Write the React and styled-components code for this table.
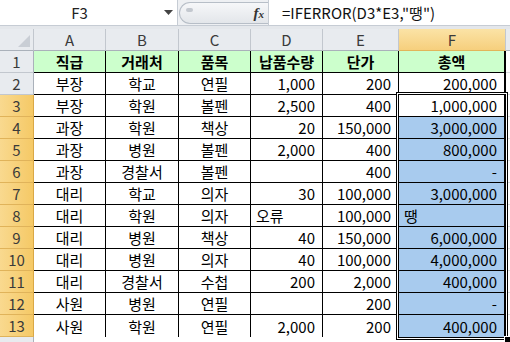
import React from "react";
import styled, { createGlobalStyle } from "styled-components";

const GlobalStyle = createGlobalStyle`
  html, body {
    margin: 0;
    padding: 0;
    background: #fff;
    overflow: hidden;
  }
  body {
    font-family: "Noto Sans CJK KR", "Noto Sans", sans-serif;
  }
`;

const COL_WIDTHS = [72, 73, 72, 72, 76, 107];
const ROW_HEAD = 34;
const HEAD_H = 22;
const ROW_H = 22;

const header = ["직급", "거래처", "품목", "납품수량", "단가", "총액"];

const rows = [
  ["부장", "학교", "연필", "1,000", "200", "200,000"],
  ["부장", "학원", "볼펜", "2,500", "400", "1,000,000"],
  ["과장", "학원", "책상", "20", "150,000", "3,000,000"],
  ["과장", "병원", "볼펜", "2,000", "400", "800,000"],
  ["과장", "경찰서", "볼펜", "", "400", "-"],
  ["대리", "학교", "의자", "30", "100,000", "3,000,000"],
  ["대리", "학원", "의자", "오류", "100,000", "땡"],
  ["대리", "병원", "책상", "40", "150,000", "6,000,000"],
  ["대리", "병원", "의자", "40", "100,000", "4,000,000"],
  ["대리", "경찰서", "수첩", "200", "2,000", "400,000"],
  ["사원", "병원", "연필", "", "200", "-"],
  ["사원", "학원", "연필", "2,000", "200", "400,000"],
];

const letters = ["A", "B", "C", "D", "E", "F"];

function alignFor(col, value) {
  if (col < 3) return "center";
  if (value === "오류" || value === "땡") return "left";
  return "right";
}

function App() {
  // selection F3:F13
  const selLeft = ROW_HEAD + COL_WIDTHS.slice(0, 5).reduce((a, b) => a + b, 0) - 3;
  const selTop = HEAD_H + ROW_H * 2 - 3;
  const selWidth = COL_WIDTHS[5] + 5;
  const selHeight = ROW_H * 11 + 6;

  return (
    <Sheet>
      <GlobalStyle />
      <FormulaBar>
        <NameBox>
          <NameText>F3</NameText>
          <Caret>
            <svg width="9" height="5" viewBox="0 0 9 5">
              <polygon points="0,0 9,0 4.5,5" fill="#444" />
            </svg>
          </Caret>
        </NameBox>
        <FxZone>
          <Pill>
            <GripDot />
            <Fx>
              f<small>x</small>
            </Fx>
          </Pill>
        </FxZone>
        <FormulaInput>=IFERROR(D3*E3,"땡")</FormulaInput>
      </FormulaBar>
      <Band />
      <GridWrap>
        <Grid>
          <Corner>
            <svg width="12" height="12" viewBox="0 0 12 12">
              <polygon points="12,0 12,12 0,12" fill="#c9ced5" />
            </svg>
          </Corner>
          {letters.map((l) => (
            <ColHead key={l} $active={l === "F"}>
              {l}
            </ColHead>
          ))}
          <ColHead $filler />

          <RowHead>1</RowHead>
          {header.map((h, i) => (
            <Cell key={h} $first={i === 0} $last={i === 5} $bg="#ccffcc" $bold>
              {h}
            </Cell>
          ))}
          <Blank />

          {rows.map((r, ri) => {
            const rowNo = ri + 2;
            const selected = rowNo >= 3;
            return (
              <React.Fragment key={rowNo}>
                <RowHead $active={selected}>{rowNo}</RowHead>
                {r.map((v, ci) => (
                  <Cell
                    key={ci}
                    $first={ci === 0}
                    $last={ci === 5}
                    $bottom={rowNo === 13}
                    $align={alignFor(ci, v)}
                    $bg={ci === 5 && rowNo >= 4 ? "#a8cbee" : "#fff"}
                  >
                    {v === "-" ? "- " : v}
                  </Cell>
                ))}
                <Blank />
              </React.Fragment>
            );
          })}

          <RowHead $tail />
          {letters.map((l) => (
            <Blank key={l} $tail />
          ))}
          <Blank $tail />
        </Grid>
        <Selection
          style={{ left: selLeft, top: selTop, width: selWidth, height: selHeight }}
        >
          <FillHandle />
        </Selection>
      </GridWrap>
    </Sheet>
  );
}

const Sheet = styled.div`
  width: 510px;
  height: 342px;
  overflow: hidden;
  background: #fff;
`;

const FormulaBar = styled.div`
  display: flex;
  height: 26px;
  box-sizing: border-box;
  border-bottom: 1px solid #c6ccd4;
  background: #eef0f3;
`;

const NameBox = styled.div`
  display: flex;
  align-items: center;
  width: 177px;
  background: #fff;
  border-right: 1px solid #c6ccd4;
  font-size: 15px;
  color: #222;
`;

const NameText = styled.span`
  flex: 1;
  text-align: center;
`;

const Caret = styled.span`
  display: flex;
  width: 18px;
  justify-content: center;
  padding-bottom: 1px;
`;

const FxZone = styled.div`
  width: 91px;
  display: flex;
  align-items: center;
  padding-top: 1px;
  box-sizing: border-box;
  border-right: 1px solid #c6ccd4;
`;

const Pill = styled.div`
  flex: 1;
  height: 22px;
  margin-left: 1px;
  box-sizing: border-box;
  border: 1px solid #b7bec7;
  border-right: none;
  border-radius: 12px 0 0 12px;
  background: linear-gradient(#f6f7f9, #e3e6ea);
  display: flex;
  align-items: center;
  justify-content: space-between;
  padding: 0 4px 0 6px;
`;

const GripDot = styled.span`
  width: 7px;
  height: 4px;
  border-radius: 3px;
  background: #c3c8cf;
  margin-top: -6px;
`;

const Fx = styled.span`
  font-family: "Liberation Serif", serif;
  font-style: italic;
  font-weight: 700;
  font-size: 15px;
  color: #333;
  small {
    font-size: 11px;
  }
`;

const FormulaInput = styled.div`
  flex: 1;
  background: #fff;
  display: flex;
  align-items: center;
  padding-left: 13px;
  font-size: 15px;
  color: #111;
  white-space: nowrap;
`;

const Band = styled.div`
  height: 3px;
  background: #e4e7eb;
`;

const GridWrap = styled.div`
  position: relative;
`;

const Grid = styled.div`
  display: grid;
  grid-template-columns: ${ROW_HEAD}px ${COL_WIDTHS.map((w) => `${w}px`).join(" ")} 1fr;
  grid-auto-rows: ${ROW_H}px;
`;

const Corner = styled.div`
  box-sizing: border-box;
  background: #e8ebef;
  border-right: 1px solid #c2c7ce;
  border-bottom: 1px solid #aab1ba;
  display: flex;
  align-items: flex-end;
  justify-content: flex-end;
  padding: 0 3px 3px 0;
`;

const ColHead = styled.div`
  box-sizing: border-box;
  height: ${HEAD_H}px;
  display: flex;
  align-items: center;
  justify-content: center;
  font-size: 15px;
  color: #3a3a3a;
  background: ${(p) =>
    p.$active ? "linear-gradient(#fbe3a6, #f6cf7d)" : "#e8ebef"};
  border-right: ${(p) => (p.$filler ? "none" : "1px solid #c2c7ce")};
  border-bottom: 1px solid ${(p) => (p.$active ? "#e2b55a" : "#aab1ba")};
`;

const RowHead = styled.div`
  box-sizing: border-box;
  display: flex;
  align-items: center;
  justify-content: center;
  font-size: 15px;
  color: #3a3a3a;
  background: ${(p) =>
    p.$active ? "linear-gradient(90deg, #f9d98f, #f5c966)" : "#e8ebef"};
  border-bottom: 1px solid ${(p) => (p.$active ? "#e0b35a" : "#c2c7ce")};
  border-right: 1px solid ${(p) => (p.$active ? "#d9a846" : "#aab1ba")};
`;

const Cell = styled.div`
  box-sizing: border-box;
  min-width: 0;
  display: flex;
  align-items: center;
  justify-content: ${(p) =>
    p.$align === "right" ? "flex-end" : p.$align === "left" ? "flex-start" : "center"};
  padding: ${(p) => (p.$align === "left" ? "0 0 0 5px" : "0 7px")};
  font-size: 15px;
  font-weight: ${(p) => (p.$bold ? 700 : 400)};
  color: #000;
  white-space: nowrap;
  overflow: hidden;
  background: ${(p) => p.$bg};
  border-right: ${(p) => (p.$last ? "2px" : "1px")} solid #000;
  border-bottom: ${(p) => (p.$bottom ? "2px" : "1px")} solid #000;
  ${(p) => (p.$bottom ? "height: 24px;" : "")}
`;

const Blank = styled.div`
  background: #fff;
  border-bottom: 1px solid ${(p) => (p.$tail ? "#fff" : "#dadcdf")};
`;

const Selection = styled.div`
  position: absolute;
  box-sizing: border-box;
  border: 1px solid #000;
  box-shadow: inset 0 0 0 1px #fff, inset 0 0 0 2px #000;
  pointer-events: none;
`;

const FillHandle = styled.span`
  position: absolute;
  right: -4px;
  bottom: -4px;
  width: 5px;
  height: 5px;
  background: #000;
  border: 1px solid #fff;
`;

export default App;
